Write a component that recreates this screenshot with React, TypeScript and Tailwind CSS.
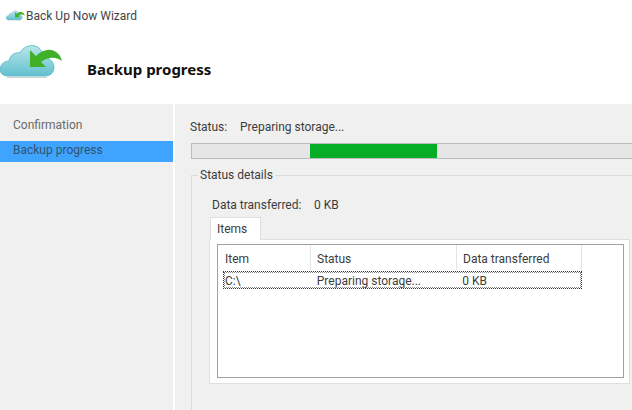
const columns = [
  { label: "Item", value: "C:\\", width: "w-[87px]", pad: "pl-[1px]" },
  { label: "Status", value: "Preparing storage...", width: "w-[146px]", pad: "pl-[6px]" },
  { label: "Data transferred", value: "0 KB", width: "w-[125px]", pad: "pl-[6px]" },
];

function CloudIcon({ size }: { size: number }) {
  return (
    <svg width={size} height={(size * 36) / 63} viewBox="0 0 63 36" className="shrink-0">
      <defs>
        <linearGradient id="cloud" x1="0" y1="0" x2="0" y2="1">
          <stop offset="0" stopColor="#b9e6ec" />
          <stop offset="1" stopColor="#63c0ce" />
        </linearGradient>
      </defs>
      <path
        d="M8 33 C2 33 -1 29 0.5 24 C2 20 5 18 9 18 C10 12 15 9 20 10 C23 3 33 0 39 5 C43 9 43 12 43 14 C49 14 54 19 54 24 C54 30 50 33 45 33 Z"
        fill="url(#cloud)"
        stroke="#55b4c4"
        strokeWidth="0.8"
      />
      <path d="M7 34.5 H47" stroke="#9a9a9a" strokeWidth="1.2" opacity="0.45" />
      <path
        d="M30 7 L36 13 C41 8 47 6 51 7 C57 8 61 13 62 18 C58 15 50 12 41 19 L46 24 H30 Z"
        fill="#3fb027"
      />
    </svg>
  );
}

export default function App() {
  return (
    <div className="flex h-[410px] w-[632px] flex-col overflow-hidden bg-white font-['Roboto',sans-serif] text-[12px] leading-4 text-[#3c3c3c]">
      <div className="h-[104px] shrink-0">
        <div className="flex h-[24px] items-center gap-[1px] pl-[6px] pt-[7px] text-[#444]">
          <CloudIcon size={19} />
          <span className="pt-[1px]">Back Up Now Wizard</span>
        </div>
        <div className="mt-[19px] flex items-start">
          <CloudIcon size={63} />
          <h1 className="ml-[24px] mt-[16px] font-['Noto_Sans',sans-serif] text-[15px] font-bold leading-5 text-[#111]">
            Backup progress
          </h1>
        </div>
      </div>

      <div className="flex min-h-0 flex-1">
        <nav className="w-[173px] shrink-0 bg-[#f0f0f0] pt-[12px]">
          <div className="h-[25px] pl-[13px] pt-[1px] text-[#6b6b6b]">Confirmation</div>
          <div className="h-[21px] bg-[#3fa4ff] pl-[13px] pt-[1px] text-[#33536f]">Backup progress</div>
        </nav>

        <main className="ml-[2px] flex-1 bg-[#f0f0f0] pl-[16px] pt-[15px]">
          <div className="-ml-[1px] flex">
            <span className="w-[50px]">Status:</span>
            <span>Preparing storage...</span>
          </div>

          <div className="mt-[8px] h-[16px] w-[470px] border border-[#bcbcbc] bg-[#e6e6e6] pl-[118px]">
            <div className="h-full w-[127px] bg-[#06ad26]" />
          </div>

          <section className="relative mt-[16px] h-[260px] w-[470px] border-l border-t border-[#dcdcdc] pl-[18px] pt-[21px]">
            <span className="absolute -top-[9px] left-[6px] bg-[#f0f0f0] px-[2px]">Status details</span>
            <div className="ml-[2px] flex">
              <span className="w-[102px]">Data transferred:</span>
              <span>0 KB</span>
            </div>

            <div className="relative z-10 mt-[4px] flex h-[23px] w-[51px] items-center border border-b-0 border-[#dfdfdf] bg-white pl-[6px]">
              Items
            </div>
            <div className="-ml-[1px] -mt-[1px] h-[145px] w-[421px] border border-[#dfdfdf] bg-white pl-[7px] pt-[4px]">
              <div className="h-[134px] w-[407px] border border-[#a0a0a0] pl-[5px]">
                <div className="flex h-[26px] items-center pl-[1px]">
                  {columns.map((col) => (
                    <div key={col.label} className={`${col.width} ${col.pad} flex h-full items-center border-r border-[#e5e5e5] pt-[1px]`}>
                      {col.label}
                    </div>
                  ))}
                </div>
                <div className="flex h-[18px] w-[359px] items-center border border-dotted border-[#333] pt-[1px] outline-1 outline-offset-[-2px] outline-dotted outline-[#888]">
                  {columns.map((col) => (
                    <div key={col.label} className={`${col.width} ${col.pad}`}>
                      {col.value}
                    </div>
                  ))}
                </div>
              </div>
            </div>
          </section>
        </main>
      </div>
    </div>
  );
}
